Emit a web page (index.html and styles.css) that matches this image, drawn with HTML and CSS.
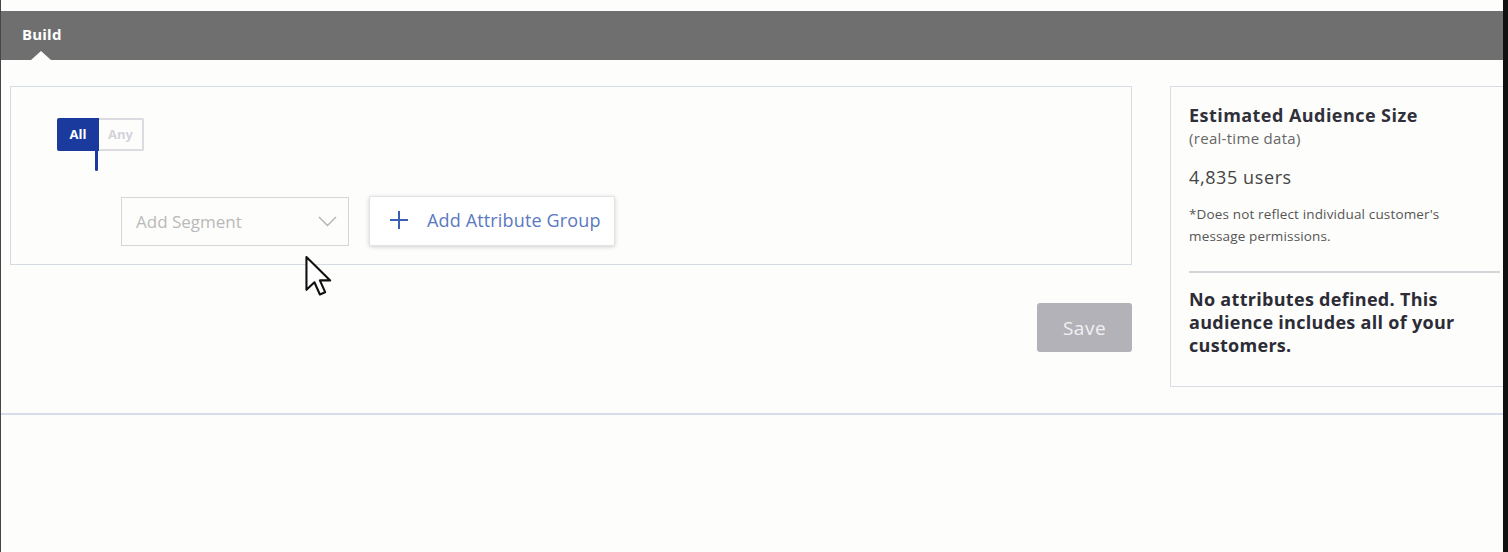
FILE: index.html
```html
<!DOCTYPE html>
<html lang="en">
<head>
  <meta charset="UTF-8">
  <meta name="viewport" content="width=device-width, initial-scale=1.0">
  <title>Build Audience</title>
  <link rel="stylesheet" href="styles.css">
</head>
<body>
  <div class="page">
    <div class="tabbar">
      <span class="tab">Build</span>
    </div>

    <div class="content">
      <div class="builder">
        <div class="rules">
          <div class="toggle">
            <span class="opt active">All</span>
            <span class="opt">Any</span>
          </div>
          <div class="row">
            <div class="select">
              <span>Add Segment</span>
              <svg class="chev" width="19" height="11" viewBox="0 0 19 11"><path d="M1 1l8.5 8.5L18 1" fill="none" stroke="#b3b3b3" stroke-width="1.4"/></svg>
            </div>
            <button class="add-group">
              <svg width="20" height="20" viewBox="0 0 20 20"><path d="M10 1v18M1 10h18" stroke="#3d5fb1" stroke-width="2"/></svg>
              <span>Add Attribute Group</span>
            </button>
          </div>
        </div>
        <div class="actions">
          <button class="save">Save</button>
        </div>
      </div>

      <div class="estimate">
        <h3>Estimated Audience Size</h3>
        <p class="sub">(real-time data)</p>
        <p class="count">4,835 users</p>
        <p class="note">*Does not reflect individual customer's message permissions.</p>
        <hr>
        <p class="empty">No attributes defined. This audience includes all of your customers.</p>
      </div>
    </div>
  </div>

  <!-- mouse pointer from the screen capture -->
  <svg class="cursor" width="28" height="42" viewBox="0 0 13 20"><path d="M1 1V16.6L4.8 13L7.4 18.8L9.9 17.7L7.4 12.1H12.3Z" fill="#fff" stroke="#111" stroke-width="1" stroke-linejoin="round"/></svg>
</body>
</html>
```

FILE: styles.css
```css
body {
  margin: 0;
  background: #fdfdfb;
  font-family: "Open Sans", sans-serif;
  color: #333;
}

.page {
  height: 552px;
  border-left: 1px solid #46464c;
  border-right: 5px solid #111;
  overflow: hidden;
}

/* tab bar */
.tabbar {
  margin-top: 11px;
  height: 49px;
  background: #6f6f6f;
  position: relative;
}
.tab {
  display: inline-block;
  padding-left: 21px;
  line-height: 47px;
  color: #fff;
  font-weight: 700;
  font-size: 15px;
  letter-spacing: 0.2px;
}
.tabbar::after {
  content: '';
  position: absolute;
  left: 30px;
  bottom: 0;
  border-left: 10px solid transparent;
  border-right: 10px solid transparent;
  border-bottom: 9px solid #fdfdfb;
}

/* main area */
.content {
  display: flex;
  gap: 38px;
  padding: 26px 0 26px 9px;
  border-bottom: 2px solid #d5dde7;
}
.builder {
  width: 1122px;
}
.rules {
  height: 146px;
  border: 1px solid #d5dbe3;
  padding: 31px 0 0 46px;
}

.toggle {
  display: flex;
  position: relative;
}
.toggle::after {
  content: '';
  position: absolute;
  left: 38px;
  top: 33px;
  width: 3px;
  height: 20px;
  background: #1b3a9d;
  border-radius: 0 0 2px 2px;
}
.opt {
  height: 33px;
  line-height: 33px;
  font-size: 13px;
  font-weight: 700;
  box-sizing: border-box;
}
.opt:first-child {
  width: 42px;
  text-align: center;
  background: #1b3a9d;
  color: #fff;
  border-radius: 2px 0 0 2px;
}
.opt:last-child {
  width: 45px;
  text-align: center;
  color: #d3d3da;
  border: 2px solid #dcdce0;
  border-left: 0;
  line-height: 29px;
  border-radius: 0 2px 2px 0;
}

.row {
  display: flex;
  gap: 20px;
  margin: 45px 0 0 64px;
  align-items: center;
}
.select {
  width: 228px;
  height: 49px;
  box-sizing: border-box;
  border: 1px solid #d6d6d6;
  display: flex;
  align-items: center;
  justify-content: space-between;
  padding: 0 11px 0 14px;
  font-size: 17px;
  color: #b9b9b9;
}
.add-group {
  height: 50px;
  box-sizing: border-box;
  display: flex;
  align-items: center;
  gap: 18px;
  padding: 0 13px 2px 19px;
  background: #fff;
  border: 1px solid #e3e3e6;
  border-radius: 2px;
  box-shadow: 0 1px 4px rgba(0, 0, 0, 0.18);
  font-family: "Open Sans", sans-serif;
  font-size: 18px;
  letter-spacing: 0.15px;
  color: #5a79bf;
}

.actions {
  display: flex;
  justify-content: flex-end;
  margin-top: 38px;
}
.save {
  width: 95px;
  height: 49px;
  border: 0;
  border-radius: 3px;
  background: #b4b2b9;
  color: #f1f1f1;
  font-family: "Open Sans", sans-serif;
  font-size: 19px;
  letter-spacing: 0.5px;
}

/* audience size panel */
.estimate {
  flex: 1;
  border: 1px solid #d8dde5;
  border-right: 0;
  padding: 16px 3px 29px 18px;
}
.estimate h3 {
  margin: 0;
  font-size: 18px;
  line-height: 24px;
  font-weight: 700;
  letter-spacing: 0.45px;
  color: #30303a;
}
.estimate p {
  margin: 0;
}
.sub {
  font-size: 15px;
  line-height: 22px;
  letter-spacing: 0.3px;
  color: #666;
}
.count {
  margin-top: 16px !important;
  font-size: 18px;
  line-height: 24px;
  letter-spacing: 0.6px;
  color: #444;
}
.note {
  margin-top: 14px !important;
  font-size: 13.5px;
  line-height: 22px;
  letter-spacing: 0.15px;
  color: #555;
  max-width: 275px;
}
.estimate hr {
  margin: 24px 0 0;
  border: 0;
  border-top: 2px solid #d6d6da;
}
.empty {
  margin-top: 15px !important;
  font-size: 18px;
  line-height: 23px;
  font-weight: 700;
  letter-spacing: 0.3px;
  color: #2c2c36;
}

.cursor {
  position: absolute;
  left: 304px;
  top: 255px;
}
```
